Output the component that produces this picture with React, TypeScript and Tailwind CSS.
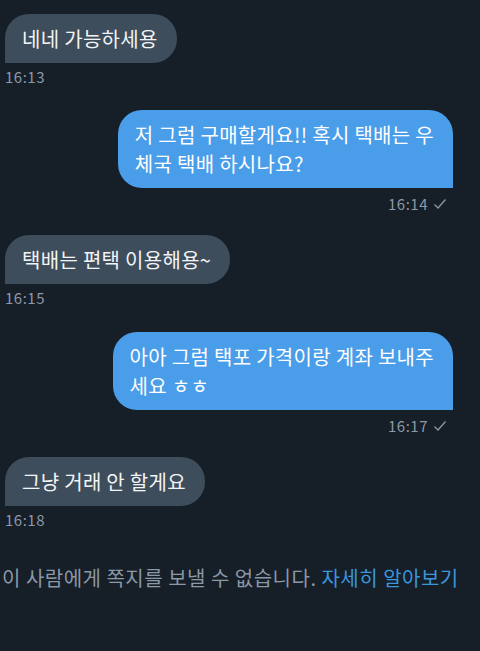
const font = { fontFamily: '"Noto Sans CJK KR", "Noto Sans", sans-serif' };

const Check = () => (
  <svg width="14" height="12" viewBox="0 0 14 12" className="ml-[5px]">
    <polyline points="1.5,6.5 5,10 12.5,1.5" fill="none" stroke="#8b98a5" strokeWidth="1.3" />
  </svg>
);

const Received = ({ text, time, top }: { text: string; time: string; top: string }) => (
  <div className={`flex flex-col items-start pl-[5px] ${top}`}>
    <div className="rounded-3xl rounded-bl-none bg-[#3e4d5b] pl-[17px] pr-[19px] py-[10px] text-[20px] leading-[29px] tracking-[0.3px] text-[#f2f4f6]">
      {text}
    </div>
    <div className="mt-[4px] text-[15px] leading-[20px] tracking-[0.5px] text-[#8b98a5]">{time}</div>
  </div>
);

const Sent = ({ lines, time, top }: { lines: string[]; time: string; top: string }) => (
  <div className={`flex flex-col items-end pr-[27px] ${top}`}>
    <div className="rounded-3xl rounded-br-none bg-[#4a9de8] pl-[17px] pr-[19px] py-[10px] text-[20px] leading-[29px] tracking-[0.3px] text-white">
      {lines.map((l, i) => (
        <div key={i}>{l}</div>
      ))}
    </div>
    <div className="mt-[6px] mr-[6px] flex items-center text-[15px] leading-[20px] tracking-[0.5px] text-[#8b98a5]">
      {time}
      <Check />
    </div>
  </div>
);

export default function App() {
  return (
    <div className="w-[480px] h-[651px] overflow-hidden bg-[#161e28]" style={font}>
      <Received text="네네 가능하세용" time="16:13" top="mt-[14px]" />
      <Sent lines={["저 그럼 구매할게요!! 혹시 택배는 우", "체국 택배 하시나요?"]} time="16:14" top="mt-[23px]" />
      <Received text="택배는 편택 이용해용~" time="16:15" top="mt-[21px]" />
      <Sent lines={["아아 그럼 택포 가격이랑 계좌 보내주", "세요 ㅎㅎ"]} time="16:17" top="mt-[24px]" />
      <Received text="그냥 거래 안 할게요" time="16:18" top="mt-[21px]" />
      <div className="mt-[34px] pl-[2px] whitespace-nowrap text-[20px] leading-[28px] tracking-[0.5px] text-[#8b98a5]">
        이 사람에게 쪽지를 보낼 수 없습니다. <span className="text-[#3a97dc]">자세히 알아보기</span>
      </div>
    </div>
  );
}
